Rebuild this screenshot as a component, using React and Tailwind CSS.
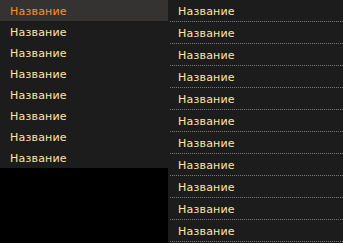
import React from "react";

const leftItems = Array.from({ length: 8 }, () => "Название");
const rightItems = Array.from({ length: 11 }, () => "Название");

const App = () => {
  return (
    <div
      className="flex w-[343px] h-[243px] bg-black overflow-hidden text-[11px]"
      style={{ fontFamily: '"DejaVu Sans", sans-serif' }}
    >
      {/* main menu */}
      <ul className="w-[168px] self-start bg-[#1c1c1c]">
        {leftItems.map((name, i) => (
          <li
            key={i}
            className={`h-[21px] pl-[10px] pt-px flex items-center leading-none tracking-[0.2px] ${
              i === 0 ? "bg-[#343331] text-[#f39236]" : "text-[#fde6a4]"
            }`}
          >
            {name}
          </li>
        ))}
      </ul>

      {/* submenu */}
      <ul className="flex-1 bg-[#1c1c1c] pl-[2px]">
        {rightItems.map((name, i) => (
          <li
            key={i}
            className="h-[22px] pl-[8px] pt-px flex items-center leading-none tracking-[0.2px] text-[#fde6a4] border-b border-dotted border-[#7a7a7a]"
          >
            {name}
          </li>
        ))}
      </ul>
    </div>
  );
};

export default App;
